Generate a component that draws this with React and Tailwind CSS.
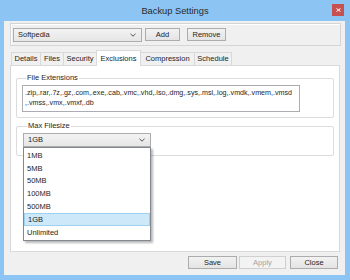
import React from "react";

const tabs = [
  { name: "Details", w: "w-[30px]" },
  { name: "Files", w: "w-[24px]" },
  { name: "Security", w: "w-[34px]" },
  { name: "Exclusions", w: "w-[45px]", active: true },
  { name: "Compression", w: "w-[55px]" },
  { name: "Schedule", w: "w-[38px]" },
];

const sizes = ["1MB", "5MB", "50MB", "100MB", "500MB", "1GB", "Unlimited"];

function Chevron() {
  return (
    <svg width="6" height="4" viewBox="0 0 6 4" className="shrink-0">
      <path d="M0.5 0.8 L3 3.2 L5.5 0.8" fill="none" stroke="#555" strokeWidth="1" />
    </svg>
  );
}

function Combo({ value, className }) {
  return (
    <div
      className={`h-[14px] flex items-center justify-between pl-[4px] pr-[5px] border border-[#acacac] bg-gradient-to-b from-[#f3f3f3] to-[#e6e6e6] text-[#1e1e1e] ${className}`}
    >
      <span>{value}</span>
      <Chevron />
    </div>
  );
}

function Button({ children, disabled, className }) {
  return (
    <div
      className={`h-[13px] flex items-center justify-center border ${
        disabled
          ? "border-[#cfcfcf] bg-[#f3f3f3] text-[#a3a3a3]"
          : "border-[#acacac] bg-gradient-to-b from-[#f2f2f2] to-[#e4e4e4] text-[#1e1e1e]"
      } ${className}`}
    >
      {children}
    </div>
  );
}

export default function App() {
  return (
    <div className="w-[350px] h-[280px] bg-[#8cc4f4] flex flex-col font-['Liberation_Sans',Arial,sans-serif] text-[7.5px] leading-[10px] text-[#1e1e1e] overflow-hidden">
      {/* Title bar */}
      <div className="h-[21px] relative flex items-center justify-center shrink-0">
        <span className="text-[9.3px] text-[#2a2a2a]">Backup Settings</span>
        <div className="absolute right-[6px] top-[4px] w-[12px] h-[12px] bg-[#c75050] flex items-center justify-center">
          <svg width="5" height="4" viewBox="0 0 5 4">
            <path d="M0.5 0.5 L4.5 3.5 M4.5 0.5 L0.5 3.5" stroke="#fff" strokeWidth="1" />
          </svg>
        </div>
      </div>

      {/* Client area */}
      <div className="flex-1 ml-[4px] mr-[5px] mb-[5px] bg-[#f0f0f0] flex flex-col pl-[6px] pr-[4px]">
        {/* Profile bar */}
        <div className="mt-[2px] h-[23px] border border-[#d5d5d5] shadow-[inset_1px_1px_0_#fff] flex items-center pl-[2px]">
          <Combo value="Softpedia" className="w-[129px]" />
          <Button className="w-[35px] ml-[3px]">Add</Button>
          <Button className="w-[39px] ml-[7px]">Remove</Button>
        </div>

        {/* Tabs */}
        <div className="mt-[4px] h-[16px] flex items-end pl-[1px]">
          {tabs.map((t, i) => (
            <div
              key={t.name}
              className={`${t.w} ${i > 0 ? "-ml-px" : ""} flex items-center justify-center border-l border-t border-r border-[#d9d9d9] ${
                t.active ? "h-[16px] bg-white relative z-10" : "h-[14px] bg-[#f0f0f0] pb-[1px]"
              }`}
            >
              {t.name}
            </div>
          ))}
        </div>

        {/* Tab page */}
        <div className="-mt-px mr-px h-[187px] bg-white border border-[#d9d9d9] px-[5px]">
          <fieldset className="mt-[7px] border border-[#dcdcdc] rounded-[2px] pl-[5px] pb-[5px]">
            <legend className="ml-[4px] px-[1px]">File Extensions</legend>
            <div className="mt-[2px] w-[278px] h-[27px] border border-[#abadb3] pt-[2px] pl-[2px] text-[7.15px] whitespace-nowrap">
              <div>.zip,.rar,.7z,.gz,.com,.exe,.cab,.vmc,.vhd,.iso,.dmg,.sys,.msi,.log,.vmdk,.vmem,.vmsd</div>
              <div>,.vmss,.vmx,.vmxf,.db</div>
            </div>
          </fieldset>

          <fieldset className="mt-[3px] border border-[#dcdcdc] rounded-[2px] pl-[6px] pb-[8px]">
            <legend className="ml-[4px] px-[1px]">Max Filesize</legend>
            <div className="mt-[2px] w-[128px] relative">
              <Combo value="1GB" className="w-[128px]" />
              {/* open dropdown list */}
              <div className="absolute left-0 top-full w-[128px] bg-white border border-[#828790] pt-[1.5px] pb-px shadow-[2px_2px_2px_rgba(0,0,0,0.28)] z-20">
                {sizes.map((s) => (
                  <div
                    key={s}
                    className={`h-[12.8px] flex items-center pl-[3px] ${
                      s === "1GB" ? "bg-[#cde8f8] border border-[#9ed0f2] pl-[2px]" : ""
                    }`}
                  >
                    {s}
                  </div>
                ))}
              </div>
            </div>
          </fieldset>
        </div>

        {/* Footer buttons */}
        <div className="mt-[4px] flex justify-end pr-[3px]">
          <Button className="w-[49px]">Save</Button>
          <Button disabled className="w-[47px] ml-[2px]">Apply</Button>
          <Button className="w-[48px] ml-[4px]">Close</Button>
        </div>
      </div>
    </div>
  );
}
